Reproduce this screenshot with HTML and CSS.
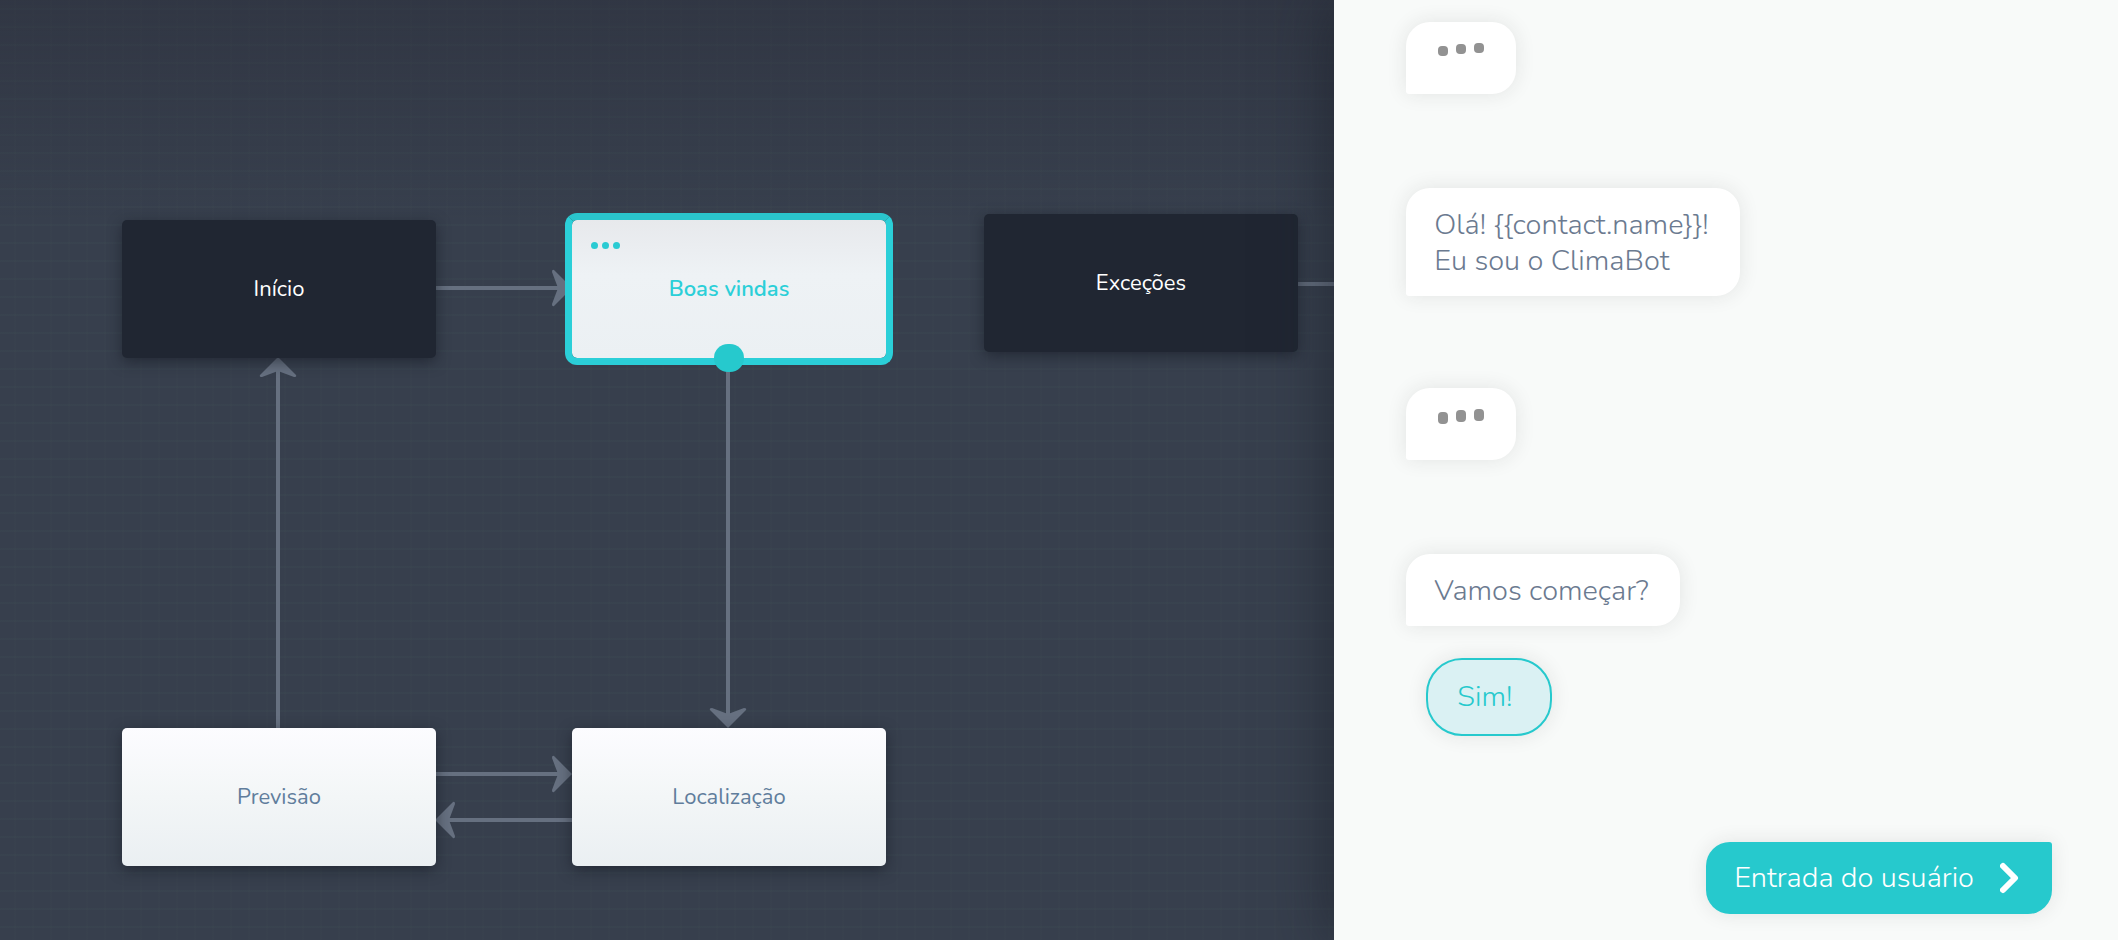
FILE: index.html
```html
<!DOCTYPE html>
<html lang="pt-BR">
<head>
<meta charset="utf-8">
<meta name="viewport" content="width=device-width, initial-scale=1">
<title>ClimaBot</title>
<link rel="stylesheet" href="styles.css">
</head>
<body class="app">
  <main class="canvas">
    <svg class="edges" aria-hidden="true">
      <defs>
        <path id="head" d="M0 0 L-18 -18 Q-20 -19 -20 -16 L-14 0 L-20 16 Q-20 19 -18 18 Z"/>
      </defs>
      <g class="edge-lines">
        <path d="M436 288H559"/>
        <path d="M278 728V371"/>
        <path d="M728 358V715"/>
        <path d="M436 774H559"/>
        <path d="M572 820H449"/>
        <path d="M1298 284H1600"/>
      </g>
      <g class="edge-heads">
        <use href="#head" transform="translate(572 288)"/>
        <use href="#head" transform="translate(278 357) rotate(-90)"/>
        <use href="#head" transform="translate(728 728) rotate(90)"/>
        <use href="#head" transform="translate(572 774)"/>
        <use href="#head" transform="translate(435 820) rotate(180)"/>
      </g>
    </svg>
    <div class="node node-dark node-start">Início</div>
    <div class="node node-selected node-welcome">
      <span class="node-menu"><i></i><i></i><i></i></span>
      Boas vindas
      <span class="node-port"></span>
    </div>
    <div class="node node-dark node-exceptions">Exceções</div>
    <div class="node node-light node-forecast">Previsão</div>
    <div class="node node-light node-location">Localização</div>
  </main>

  <aside class="chat">
    <div class="bubble bubble-typing"><span class="typing"><i></i><i></i><i></i></span></div>
    <p class="bubble">Olá! {{contact.name}}!<br>Eu sou o ClimaBot</p>
    <div class="bubble bubble-typing"><span class="typing typing-tall"><i></i><i></i><i></i></span></div>
    <p class="bubble">Vamos começar?</p>
    <button class="reply" type="button">Sim!</button>
    <button class="user-input" type="button">
      <span>Entrada do usuário</span>
      <svg class="chevron" viewBox="0 0 20 32" aria-hidden="true"><path d="M3 4 L15 16 L3 28"/></svg>
    </button>
  </aside>
</body>
</html>
```
FILE: styles.css
```css
* {
  box-sizing: border-box;
}

.app {
  display: flex;
  min-height: 100vh;
  margin: 0;
  font-family: Nunito, Lato, "Open Sans", sans-serif;
}

/* Flow canvas */

.canvas {
  position: relative;
  flex: 1;
  overflow: hidden;
  background-color: #373f4d;
  background-image:
    linear-gradient(rgba(40, 42, 54, 0.4), rgba(40, 42, 54, 0) 220px),
    linear-gradient(rgba(66, 84, 86, 0.16) 2px, transparent 2px),
    linear-gradient(90deg, rgba(66, 84, 86, 0.08) 2px, transparent 2px);
  background-size: 100% 100%, 18px 18px, 18px 18px;
  background-position: 0 0, 0 8px, 14px 0;
}

.edges {
  position: absolute;
  inset: 0;
  width: 100%;
  height: 100%;
}

.edge-lines {
  fill: none;
  stroke: #667080;
  stroke-width: 4;
}

.edge-heads {
  fill: #667080;
}

.node {
  position: absolute;
  display: flex;
  align-items: center;
  justify-content: center;
  width: 314px;
  height: 138px;
  border-radius: 5px;
  font-size: 22px;
  font-weight: 400;
  line-height: 28px;
  box-shadow: 0 4px 14px rgba(24, 28, 38, 0.6);
}

.node-dark {
  background: #202632;
  color: #fff;
}

.node-light {
  background: linear-gradient(#fcfcff, #f3f6f7 50%, #eaeff2);
  color: #607d9c;
}

.node-selected {
  background: linear-gradient(#e7e9ec, #eef2f5 40%, #ebf0f3);
  color: #2bcfd8;
  font-weight: 600;
  box-shadow: none;
}

.node-selected::before {
  content: "";
  position: absolute;
  inset: -7px;
  border: 7px solid #2bcfd8;
  border-top-color: #2ac4cc;
  border-radius: 12px;
}

.node-start {
  left: 122px;
  top: 220px;
}

.node-welcome {
  left: 572px;
  top: 220px;
}

.node-exceptions {
  left: 984px;
  top: 214px;
}

.node-forecast {
  left: 122px;
  top: 728px;
}

.node-location {
  left: 572px;
  top: 728px;
}

.node-menu {
  position: absolute;
  left: 19px;
  top: 22px;
  display: flex;
  gap: 4px;
}

.node-menu i {
  width: 7px;
  height: 7px;
  border-radius: 50%;
  background: #2acbd3;
}

.node-port {
  position: absolute;
  left: 142px;
  bottom: -14px;
  width: 30px;
  height: 28px;
  border-radius: 14px;
  background: #26c9cd;
}

/* Conversation preview */

.chat {
  position: relative;
  display: flex;
  flex: 0 0 37%;
  flex-direction: column;
  align-items: flex-start;
  padding: 22px 66px 26px 72px;
  background: #f8faf9;
  box-shadow: 0 0 60px rgba(24, 28, 38, 0.7);
  font-size: 29px;
  font-weight: 300;
  line-height: 36px;
}

.bubble {
  margin: 0 0 92px;
  padding: 19px 31px 17px 28px;
  border-radius: 24px 24px 24px 3px;
  background: #fff;
  color: #6b7a90;
  box-shadow: 0 0 20px rgba(40, 40, 40, 0.1);
}

.bubble-typing {
  margin-bottom: 94px;
  padding: 18px 32px;
}

.typing {
  display: flex;
  align-items: flex-start;
  gap: 8px;
  height: 36px;
  padding-top: 3px;
}

.typing i {
  width: 10px;
  height: 10px;
  border-radius: 4px;
  background: #929292;
}

.typing i:nth-child(1) {
  margin-top: 3px;
}

.typing i:nth-child(2) {
  margin-top: 1px;
}

.typing-tall i {
  height: 12px;
}

.reply,
.user-input {
  font: inherit;
  box-shadow: 0 0 20px rgba(40, 40, 40, 0.1);
  cursor: pointer;
}

.reply {
  margin: -60px 0 0 20px;
  padding: 19px 38px 19px 29px;
  border: 2px solid #26c9cd;
  border-radius: 36px;
  background: #daf1f3;
  color: #26c9cd;
}

.user-input {
  display: flex;
  align-items: center;
  align-self: flex-end;
  gap: 26px;
  margin: 106px 0 0;
  padding: 18px 32px 18px 28px;
  border: 0;
  border-radius: 24px 3px 24px 24px;
  background: #26c9cd;
  color: #fff;
}

.chevron {
  width: 20px;
  height: 32px;
  fill: none;
  stroke: #fff;
  stroke-width: 6;
  stroke-linecap: round;
  stroke-linejoin: round;
}
```
